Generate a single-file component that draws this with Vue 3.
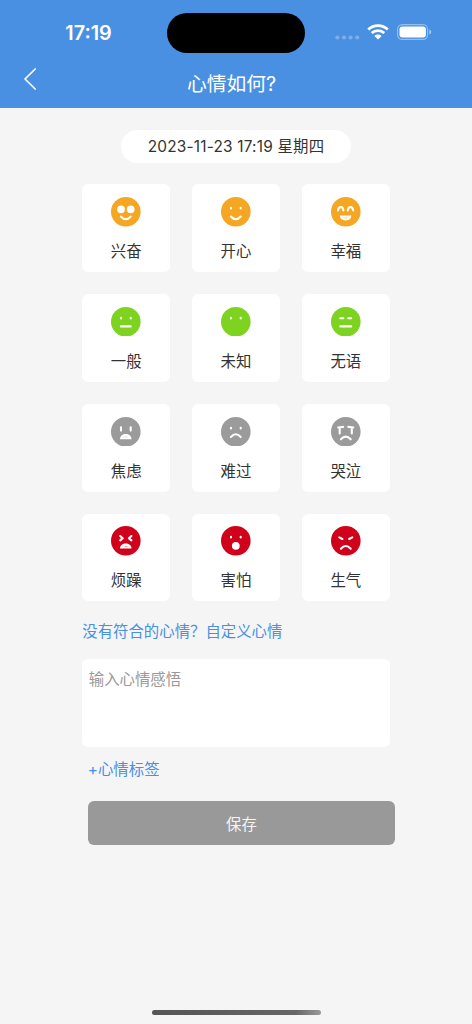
<script setup>
import { ref } from 'vue'

const date = ref('2023-11-23 17:19 星期四')
const content = ref('')

// 心情列表，face 为表情的线条，fill 为实心部分
const moods = [
  { name: '兴奋', color: '#f5a623', fill: 'M6.1 12.3a3.9 3.9 0 1 0 7.8 0a3.9 3.9 0 1 0-7.8 0M15.8 12.3a3.9 3.9 0 1 0 7.8 0a3.9 3.9 0 1 0-7.8 0', face: 'M9.9 19.6Q14.8 25 19.7 19.6' },
  { name: '开心', color: '#f5a623', face: 'M10 10.8v.6M19.7 10.8v.6M9.9 19.5Q14.8 25 19.7 19.5' },
  { name: '幸福', color: '#f5a623', fill: 'M8.7 18.6h11.8q-.6 4.9-5.9 4.9t-5.9-4.9z', tongue: 'M12.6 20.6h4.4q-2.2 1.8-4.4 0', face: 'M7 13.4C7.6 8.8 11.8 8.8 12.4 13.4M16.8 13.4C17.4 8.8 21.6 8.8 22.2 13.4' },
  { name: '一般', color: '#7ed321', face: 'M10 10.7v.8M19.7 10.7v.8M9.9 19.4h9.8' },
  { name: '未知', color: '#7ed321', face: 'M10 10.7v.8M19.7 10.7v.8' },
  { name: '无语', color: '#7ed321', face: 'M9.3 11.2h3M17.2 11.2h3M9.3 19.4h10.9' },
  { name: '焦虑', color: '#9b9b9b', fill: 'M9 22.2c0-7 11.5-7 11.5 0z', tongue: 'M12.4 20.2q2.3-1.6 4.6 0z', face: 'M10 10.3v3.3M19.7 10.3v3.3' },
  { name: '难过', color: '#9b9b9b', face: 'M10 10.8v.6M19.7 10.8v.6M9.9 20Q14.8 14.5 19.7 20' },
  { name: '哭泣', color: '#9b9b9b', face: 'M7.2 10.5L12.2 9.9M17.3 9.9L22.3 10.5M8.7 10.8V16.5M20.8 10.8V16.5M9.9 22.3Q14.8 17 19.7 22.3' },
  { name: '烦躁', color: '#d0021b', fill: 'M9 22.4c0-6.6 11.5-6.6 11.5 0z', tongue: 'M12.4 20.6q2.3-1.6 4.6 0z', face: 'M9.2 10L11.7 12.2L9.2 14.4M20.4 10L17.9 12.2L20.4 14.4' },
  { name: '害怕', color: '#d0021b', fill: 'M10.9 19.8a3.9 3.9 0 1 0 7.8 0a3.9 3.9 0 1 0-7.8 0', face: 'M10 10.8v.6M19.7 10.8v.6' },
  { name: '生气', color: '#d0021b', face: 'M8.3 11.3L11.4 13M21.3 11.3L18.2 13M9.9 22.7Q14.8 17.2 19.7 22.7' }
]
</script>

<template>
  <div class="page">
    <header class="header">
      <div class="status-bar">
        <span class="time">17:19</span>
        <div class="island"></div>
        <div class="status-icons">
          <svg class="signal" width="25" height="5" viewBox="0 0 25 5">
            <circle v-for="n in 4" :key="n" :cx="n * 6.6 - 4.2" cy="2.5" r="2.1" fill="#fff" fill-opacity=".27" />
          </svg>
          <svg class="wifi" width="22" height="16" viewBox="0 0 22 16">
            <g fill="none" stroke="#fff" stroke-width="2.7">
              <path d="M1.2 5.5C6.7.2 15.3.2 20.8 5.5" />
              <path d="M4.7 9.1C8.3 5.8 13.7 5.8 17.3 9.1" />
            </g>
            <path d="M7.4 12C9.4 10.1 12.6 10.1 14.6 12L11 15.6z" fill="#fff" />
          </svg>
          <svg class="battery" width="35" height="16" viewBox="0 0 35 16">
            <rect x=".6" y=".6" width="30" height="14.8" rx="4.6" fill="none" stroke="#fff" stroke-opacity=".42" stroke-width="1.1" />
            <rect x="2.5" y="2.6" width="26.4" height="10.8" rx="3" fill="#fff" />
            <path d="M32.3 5.5q2 .8 2 2.5t-2 2.5z" fill="#fff" fill-opacity=".5" />
          </svg>
        </div>
      </div>
      <div class="nav-bar">
        <svg class="back" width="14" height="24" viewBox="0 0 14 24">
          <path d="M12.2 2L2 12L12.2 22" fill="none" stroke="#fff" stroke-width="1.7" stroke-linecap="round" stroke-linejoin="round" />
        </svg>
        <h1 class="title">心情如何?</h1>
      </div>
    </header>

    <main class="main">
      <div class="date">{{ date }}</div>
      <div class="mood-grid">
        <div v-for="mood in moods" :key="mood.name" class="mood">
          <svg class="face" viewBox="0 0 29.6 29.6">
            <circle cx="14.8" cy="14.8" r="14.8" :fill="mood.color" />
            <path v-if="mood.fill" :d="mood.fill" fill="#fff" />
            <path v-if="mood.tongue" :d="mood.tongue" :fill="mood.color" fill-opacity=".6" />
            <path :d="mood.face" fill="none" stroke="#fff" stroke-width="2.1" stroke-linecap="round" stroke-linejoin="round" />
          </svg>
          <span class="mood-name">{{ mood.name }}</span>
        </div>
      </div>
      <a class="custom">没有符合的心情？自定义心情</a>
      <textarea v-model="content" class="content" placeholder="输入心情感悟"></textarea>
      <a class="tag">+心情标签</a>
      <button class="save">保存</button>
    </main>

    <div class="home-indicator"></div>
  </div>
</template>

<style>
body {
  margin: 0;
  background-color: #f5f5f5;
}
</style>

<style scoped>
.page {
  display: flex;
  flex-direction: column;
  align-items: center;
  height: 1024px;
  overflow: hidden;
  box-sizing: border-box;
  background-color: #f5f5f5;
  color: #333;
  font-family: Inter, "Noto Sans CJK SC", sans-serif;
  font-size: 15.4px;
}

.header {
  width: 100%;
  height: 107.5px;
  flex-shrink: 0;
  background-color: #4a90e2;
  color: white;
}

.status-bar {
  display: grid;
  grid-template-columns: 167px 138px 1fr;
  align-items: center;
  height: 40px;
  padding-top: 13px;
}

.time {
  padding-left: 10px;
  text-align: center;
  font-size: 19.8px;
  font-weight: 600;
}

.island {
  height: 40px;
  border-radius: 20px;
  background-color: black;
}

.status-icons {
  display: flex;
  align-items: center;
  padding-left: 29.5px;
}

.signal {
  margin: 9px 7.5px 0 0;
}

.wifi {
  margin-right: 7.5px;
}

.wifi,
.battery {
  margin-bottom: 2px;
}

.nav-bar {
  display: grid;
  grid-template-columns: 60px 1fr 60px;
  align-items: center;
  height: 52px;
}

.back {
  margin-left: 23px;
}

.title {
  margin: 6px 0 0;
  padding-right: 9px;
  text-align: center;
  font-size: 19.8px;
  font-weight: 400;
}

.main {
  display: flex;
  flex-direction: column;
  align-items: flex-start;
  width: 307.4px;
}

.date {
  align-self: center;
  width: 230px;
  height: 33px;
  margin: 22px 0 21.8px;
  border-radius: 17px;
  background-color: white;
  text-align: center;
  line-height: 34px;
  letter-spacing: 0.2px;
}

.mood-grid {
  display: grid;
  grid-template-columns: repeat(3, 87.8px);
  gap: 22px;
}

.mood {
  display: flex;
  flex-direction: column;
  align-items: center;
  height: 87.8px;
  border-radius: 6px;
  background-color: white;
}

.face {
  width: 29.6px;
  height: 29.6px;
  margin: 12.8px 0 14.3px;
}

.mood-name {
  line-height: 22px;
}

.custom,
.tag {
  color: #4a90e2;
  line-height: 22px;
}

.custom {
  margin-top: 20px;
}

.content {
  width: 100%;
  height: 88px;
  box-sizing: border-box;
  margin-top: 15.5px;
  padding: 10px 6.5px;
  border: none;
  border-radius: 6px;
  outline: none;
  resize: none;
  background-color: white;
  color: #333;
  font: inherit;
  line-height: 22px;
}

.content::placeholder {
  color: #999;
  opacity: 1;
}

.tag {
  margin: 12.5px 0 0 5.5px;
}

.save {
  width: 100%;
  height: 44px;
  flex-shrink: 0;
  margin: 20px 0 0 5.5px;
  padding: 0 0 1px;
  border: none;
  border-radius: 6px;
  background-color: #999;
  color: #f5f5f5;
  font: inherit;
}

.home-indicator {
  width: 169px;
  height: 5.5px;
  margin: auto 0 9px;
  border-radius: 3px;
  background: linear-gradient(to right, #555, #666 85%, #999);
}
</style>
